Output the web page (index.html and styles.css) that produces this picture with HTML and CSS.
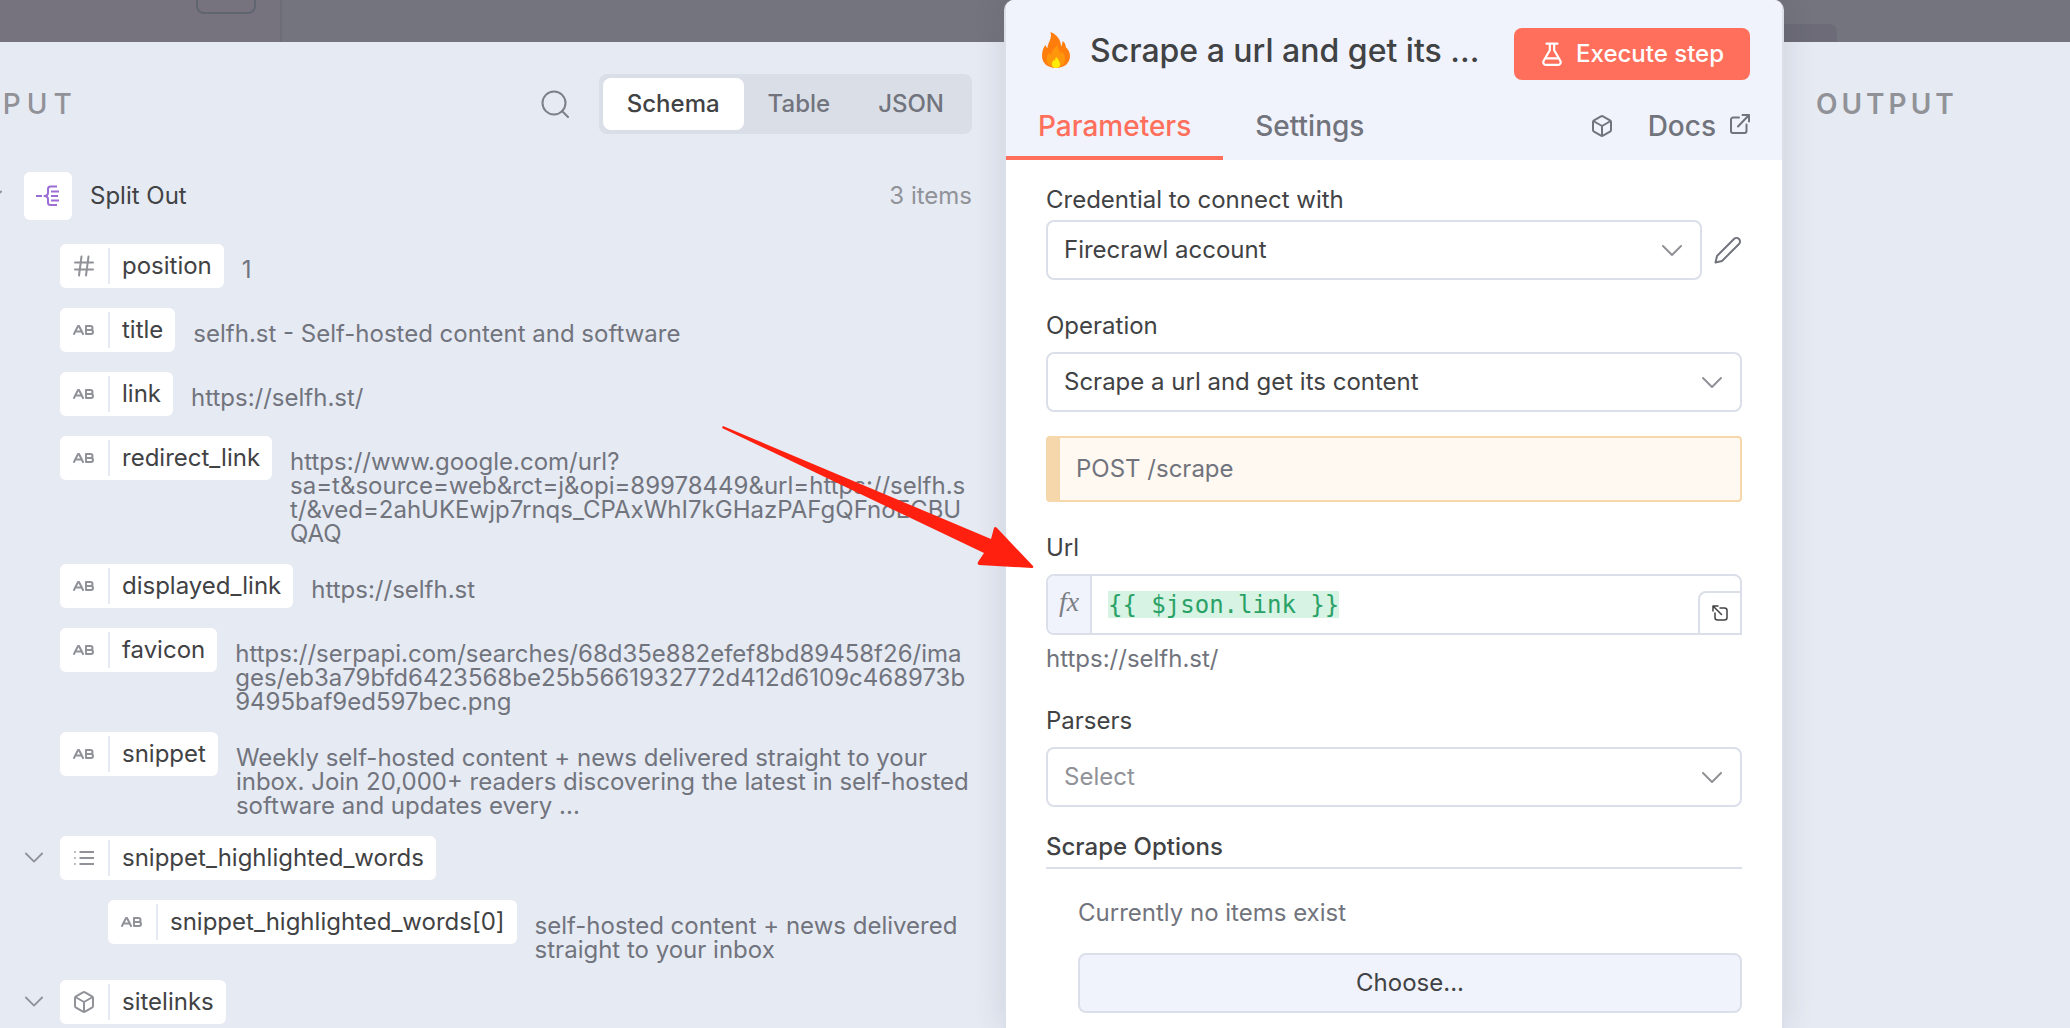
FILE: index.html
```html
<!DOCTYPE html>
<html lang="en">
<head>
  <meta charset="utf-8">
  <title>Scrape a url and get its content</title>
  <link rel="stylesheet" href="styles.css">
</head>
<body>

  <!-- shared icons -->
  <svg class="sprite" aria-hidden="true">
    <symbol id="chevron" viewBox="0 0 20 12">
      <path d="M1 1l9 9 9-9" />
    </symbol>
    <symbol id="text-type" viewBox="0 0 22 12">
      <path d="M1 10L5 2h1l4 8M3 7.500h5M13 2v8h5a2 2 0 0 0 0-4h-5h4.500a2 2 0 0 0 0-4z" />
    </symbol>
    <symbol id="box" viewBox="0 0 24 24">
      <path d="M21 8a2 2 0 0 0-1-1.730l-7-4a2 2 0 0 0-2 0l-7 4A2 2 0 0 0 3 8v8a2 2 0 0 0 1 1.730l7 4a2 2 0 0 0 2 0l7-4A2 2 0 0 0 21 16zM3.300 7l8.700 5 8.700-5M12 22V12" />
    </symbol>
  </svg>

  <div class="app">
    <div class="canvas">
      <div class="sidebar"><div class="sidebar-box"></div></div>
      <div class="canvas-tab"></div>
    </div>

    <section class="input-panel">
      <header class="input-header">
        <h2 class="panel-title wide">INPUT</h2>
        <button class="icon-button search" aria-label="Search">
          <svg class="icon" viewBox="0 0 28 28"><circle cx="13" cy="13" r="11.500" /><path d="M21 21l6 6" /></svg>
        </button>
        <div class="switcher">
          <button class="switch active">Schema</button>
          <button class="switch">Table</button>
          <button class="switch">JSON</button>
        </div>
      </header>

      <div class="node-row">
        <button class="toggle" aria-label="Collapse Split Out"><svg class="icon"><use href="#chevron" /></svg></button>
        <span class="node-icon">
          <svg viewBox="0 0 24 24">
            <path d="M0 12h6M21 2.500h-6.500q-2.500 0-2.500 2.500v3.500q0 3.500-3.500 3.500q3.500 0 3.500 3.500v3q0 2.500 2.500 2.500H21M15 7.500h8M15 12h7M15 16.500h8" />
          </svg>
        </span>
        <span class="node-name">Split Out</span>
        <span class="node-count">3 items</span>
      </div>

      <div class="schema">
        <div class="row">
          <span class="pill"><span class="type"><svg class="hash" viewBox="0 0 20 22"><path d="M1 7.500h18M1 14.500h18M7.500 1.500l-2.500 19M14.500 1.500l-2.500 19" /></svg></span><span class="name">position</span></span>
          <span class="value">1</span>
        </div>
        <div class="row">
          <span class="pill"><span class="type"><svg class="ab"><use href="#text-type" /></svg></span><span class="name">title</span></span>
          <span class="value">selfh.st - Self-hosted content and software</span>
        </div>
        <div class="row">
          <span class="pill"><span class="type"><svg class="ab"><use href="#text-type" /></svg></span><span class="name">link</span></span>
          <span class="value">https://selfh.st/</span>
        </div>
        <div class="row">
          <span class="pill"><span class="type"><svg class="ab"><use href="#text-type" /></svg></span><span class="name">redirect_link</span></span>
          <span class="value">https://www.google.com/url?sa=t&amp;source=web&amp;rct=j&amp;opi=89978449&amp;url=https://selfh.st/&amp;ved=2ahUKEwjp7rnqs_CPAxWhI7kGHazPAFgQFnoECBUQAQ</span>
        </div>
        <div class="row">
          <span class="pill"><span class="type"><svg class="ab"><use href="#text-type" /></svg></span><span class="name">displayed_link</span></span>
          <span class="value">https://selfh.st</span>
        </div>
        <div class="row">
          <span class="pill"><span class="type"><svg class="ab"><use href="#text-type" /></svg></span><span class="name">favicon</span></span>
          <span class="value">https://serpapi.com/searches/68d35e882efef8bd89458f26/images/eb3a79bfd6423568be25b5661932772d412d6109c468973b9495baf9ed597bec.png</span>
        </div>
        <div class="row">
          <span class="pill"><span class="type"><svg class="ab"><use href="#text-type" /></svg></span><span class="name">snippet</span></span>
          <span class="value">Weekly self-hosted content + news delivered straight to your inbox. Join 20,000+ readers discovering the latest in self-hosted software and updates every ...</span>
        </div>
        <div class="row group">
          <button class="toggle" aria-label="Collapse snippet_highlighted_words"><svg class="icon"><use href="#chevron" /></svg></button>
          <span class="pill"><span class="type"><svg class="list" viewBox="0 0 20 16"><path d="M5.500 2H20M5.500 8H20M5.500 14H20" /><path class="dots" d="M0 2h2M0 8h2M0 14h2" /></svg></span><span class="name">snippet_highlighted_words</span></span>
        </div>
        <div class="row nested">
          <span class="pill"><span class="type"><svg class="ab"><use href="#text-type" /></svg></span><span class="name">snippet_highlighted_words[0]</span></span>
          <span class="value">self-hosted content + news delivered straight to your inbox</span>
        </div>
        <div class="row group">
          <button class="toggle" aria-label="Collapse sitelinks"><svg class="icon"><use href="#chevron" /></svg></button>
          <span class="pill"><span class="type"><svg class="cube"><use href="#box" /></svg></span><span class="name">sitelinks</span></span>
        </div>
      </div>
    </section>

    <main class="node-panel">
      <header class="node-header">
        <div class="title-row">
          <svg class="flame" viewBox="0 0 28 36">
            <path fill="#ff7d0c" d="M8.500 0C15 2.500 19 8 19 14.500c1-1.500 1.500-3.500 1.500-5.500 2 1 3 3 3.500 6.500 2.500 2 4 5 4 8.500 0 7-5.500 12-14 12S0 31 0 24c0-5 1.500-8.500 3.500-11 .500 1.500 1 2.500 2 3C5.500 11 10.500 7 8.500 0z" />
            <path fill="#ff960b" d="M17 18c1 1 1 2.500 1 4 1-.500 1.500-1.500 1.500-3 2.500 2.500 3.500 4.500 3.500 8 0 5-3.500 8.500-9 8.500S4.500 32 4.500 27c0-3 1-4.500 3-6.500 .500 1 1 2 2 2.500C9.500 18.500 12 16 16 13c-.500 2 0 3.500 1 5z" />
            <path fill="#ffec08" d="M14 25c3 3 4 5 4 7.500 0 2-1.500 3.500-4 3.500s-4-1.500-4-3.500c0-2 .500-3.500 1.500-4.500l1 1c.500-1.500 1-2.500 1.500-4z" />
          </svg>
          <h1 class="node-title">Scrape a url and get its ...</h1>
          <button class="execute">
            <svg class="flask" viewBox="0 0 18 22"><path d="M4 1.500h10M7 1.500v6l-5.500 9.500a2.500 2.500 0 0 0 2 4h11a2.500 2.500 0 0 0 2-4L11 7.500v-6M3.500 15h11" /></svg>
            Execute step
          </button>
        </div>
        <nav class="tabs">
          <button class="tab active">Parameters</button>
          <button class="tab">Settings</button>
          <button class="icon-button community" aria-label="Community node"><svg class="icon"><use href="#box" /></svg></button>
          <a class="docs" href="#">Docs
            <svg class="external" viewBox="0 0 20 20"><path d="M9 3.500H3a2 2 0 0 0-2 2V17a2 2 0 0 0 2 2h11.500a2 2 0 0 0 2-2v-6.500M8 12.500L19 1M12.500 1H19v6.500" /></svg>
          </a>
        </nav>
      </header>

      <form class="parameters">
        <div class="field tight">
          <label for="credential">Credential to connect with</label>
          <div class="credential">
            <div class="select">
              <select id="credential"><option>Firecrawl account</option></select>
              <svg class="arrow"><use href="#chevron" /></svg>
            </div>
            <button type="button" class="icon-button edit" aria-label="Edit credential">
              <svg class="icon" viewBox="0 0 28 28"><path d="M1.500 26.500l1.500-6.500L20 3a3.500 3.500 0 0 1 5 5L8 25z" /></svg>
            </button>
          </div>
        </div>

        <div class="field">
          <label for="operation">Operation</label>
          <div class="select">
            <select id="operation"><option>Scrape a url and get its content</option></select>
            <svg class="arrow"><use href="#chevron" /></svg>
          </div>
        </div>

        <p class="notice">POST /scrape</p>

        <div class="field">
          <label for="url">Url</label>
          <div class="expression">
            <span class="fx">fx</span>
            <input type="text" id="url" class="code" value="{{ $json.link }}" spellcheck="false">
            <button type="button" class="expand" aria-label="Open expression editor">
              <svg viewBox="0 0 16 16"><path d="M8 3h4.500A2.500 2.500 0 0 1 15 5.500v7a2.500 2.500 0 0 1-2.500 2.500h-7A2.500 2.500 0 0 1 3 12.500V8M1 6V1h5M1 1l8.500 8.500" /></svg>
            </button>
          </div>
          <p class="hint">https://selfh.st/</p>
        </div>

        <div class="field after-hint">
          <label for="parsers">Parsers</label>
          <div class="select">
            <select id="parsers" class="placeholder"><option>Select</option></select>
            <svg class="arrow"><use href="#chevron" /></svg>
          </div>
        </div>

        <h3 class="section-title">Scrape Options</h3>
        <div class="options">
          <p class="empty">Currently no items exist</p>
          <button type="button" class="choose">Choose...</button>
        </div>
      </form>
    </main>

    <section class="output-panel">
      <h2 class="panel-title">OUTPUT</h2>
    </section>

    <!-- pointer from the link value to the Url field -->
    <svg class="pointer" viewBox="0 0 312 144" aria-hidden="true">
      <path d="M1 1L269 114L272 103Q273 101 275 103L311 141Q312 143 310 143L257 140Q255 139 256 137L262 128L0 3Z" />
    </svg>
  </div>

</body>
</html>
```
FILE: styles.css
```css
* {
  box-sizing: border-box;
}

body {
  margin: 0;
  font-family: Inter, sans-serif;
  font-size: 24px;
  line-height: 24px;
  color: #414244;
  background-color: #e6eaf3;
}

h1, h2, h3, p {
  margin: 0;
  font-weight: 400;
}

button, select, input {
  padding: 0;
  border: none;
  background: none;
  font: inherit;
  color: inherit;
}

button {
  cursor: pointer;
}

svg {
  display: block;
  fill: none;
  stroke: currentColor;
  stroke-width: 2;
  stroke-linecap: round;
  stroke-linejoin: round;
}

.sprite {
  display: none;
}

.icon {
  width: 100%;
  height: 100%;
}

.icon-button {
  flex: none;
  color: #71747d;
}

/* Page frame: dimmed canvas on top, three panels below */
.app {
  position: relative;
  display: grid;
  grid-template-columns: minmax(0, 1004fr) minmax(0, 780fr) minmax(0, 286fr);
  grid-template-rows: 42px auto;
  height: 100vh;
  overflow: hidden;
}

.canvas {
  grid-area: 1 / 1 / 2 / 4;
  display: flex;
  justify-content: space-between;
  background-color: #74747e;
}

.sidebar {
  display: flex;
  justify-content: flex-end;
  width: 282px;
  padding-right: 24px;
  border-right: 2px solid #6d6d7a;
  background-color: #76737f;
}

.sidebar-box {
  width: 60px;
  height: 14px;
  border: 2px solid #616471;
  border-top: none;
  border-radius: 0 0 8px 8px;
}

.canvas-tab {
  align-self: flex-end;
  width: 80px;
  height: 18px;
  margin-right: 233px;
  border-radius: 0 8px 0 0;
  background-color: #6c6b77;
}

.panel-title {
  font-size: 28px;
  line-height: 60px;
  font-weight: 600;
  letter-spacing: 4px;
  color: #909298;
}

.panel-title.wide {
  font-weight: 500;
  letter-spacing: 6px;
}

/* Input panel */
.input-panel {
  grid-area: 2 / 1 / 3 / 2;
  margin-left: -38px;
  padding: 32px 32px 0 0;
}

.input-header {
  display: flex;
  align-items: center;
  margin-bottom: 38px;
}

.search {
  width: 28px;
  height: 28px;
  margin: 0 30px 0 auto;
  color: #7d7f86;
}

.switcher {
  display: flex;
  padding: 4px;
  border-radius: 8px;
  background-color: #dadee7;
}

.switch {
  height: 52px;
  padding: 0 24px;
  border-radius: 8px;
  font-weight: 500;
  color: #71747d;
}

.switch.active {
  background-color: #fff;
  color: #414244;
}

.node-row {
  display: flex;
  align-items: center;
  margin-bottom: 24px;
  padding-left: 22px;
}

.toggle {
  flex: none;
  width: 18px;
  height: 12px;
  color: #909298;
}

.node-icon {
  display: flex;
  align-items: center;
  justify-content: center;
  width: 48px;
  height: 48px;
  margin: 0 18px 0 22px;
  border-radius: 6px;
  background-color: #fff;
  color: #9b6dd5;
}

.node-icon svg {
  width: 24px;
  height: 24px;
  stroke-linecap: butt;
}

.node-count {
  margin-left: auto;
  color: #909298;
}

.schema {
  display: flex;
  flex-direction: column;
  gap: 20px;
  padding-left: 98px;
}

.row {
  display: flex;
  align-items: flex-start;
}

.row.group {
  align-items: center;
  margin-left: -35px;
}

.row.nested {
  margin-left: 48px;
}

.group .toggle {
  margin-right: 17px;
}

.pill {
  display: flex;
  flex: none;
  align-items: center;
  height: 44px;
  border-radius: 6px;
  background-color: #fff;
}

.type {
  display: flex;
  align-items: center;
  justify-content: center;
  width: 50px;
  height: 36px;
  border-right: 2px solid #e6eaf3;
  color: #909298;
}

.ab {
  width: 22px;
  height: 12px;
}

.hash {
  width: 20px;
  height: 22px;
}

.list {
  width: 20px;
  height: 16px;
  stroke-linecap: butt;
}

.dots {
  opacity: 0.6;
}

.cube {
  width: 24px;
  height: 24px;
}

.name {
  padding: 0 12px;
}

.value {
  min-width: 0;
  margin-bottom: -2px;
  padding: 14px 0 0 18px;
  overflow-wrap: anywhere;
  color: #71747d;
}

/* Node panel */
.node-panel {
  z-index: 1;
  grid-area: 1 / 2 / 3 / 3;
  border: 2px solid #dbdfe9;
  border-width: 0 2px;
  border-radius: 10px 10px 0 0;
  background-color: #fff;
  box-shadow: 0 0 32px rgba(50, 50, 70, 0.14);
}

.node-header {
  border-radius: 8px 8px 0 0;
  background-color: #f0f3fb;
}

.title-row {
  display: flex;
  align-items: flex-start;
  padding: 24px 32px 0 36px;
}

.flame {
  flex: none;
  width: 28px;
  height: 36px;
  margin: 8px 20px 0 0;
  stroke: none;
}

.node-title {
  font-size: 32px;
  line-height: 54px;
  font-weight: 500;
  white-space: nowrap;
}

.execute {
  display: flex;
  align-items: center;
  gap: 14px;
  height: 52px;
  margin: 4px 0 0 auto;
  padding: 0 26px 0 28px;
  border-radius: 8px;
  background-color: #ff6f5c;
  font-weight: 500;
  white-space: nowrap;
  color: #fff;
}

.flask {
  width: 20px;
  height: 24px;
}

.tabs {
  display: flex;
  align-items: center;
  height: 80px;
  padding-right: 32px;
  font-size: 28px;
  font-weight: 500;
}

.tab {
  height: 80px;
  padding: 4px 32px 0;
  border: solid transparent;
  border-width: 12px 0 4px;
  color: #71747d;
}

.tab.active {
  border-bottom-color: #ff6f5c;
  color: #ff6f5c;
}

.community {
  width: 24px;
  height: 24px;
  margin: 12px 34px 0 auto;
}

.docs {
  display: flex;
  align-items: center;
  gap: 14px;
  padding-top: 12px;
  text-decoration: none;
  color: #71747d;
}

.external {
  width: 20px;
  height: 20px;
  margin-bottom: 4px;
}

.parameters {
  padding: 28px 40px 0;
}

.field {
  margin-top: 34px;
}

.field.tight {
  margin-top: 0;
}

.field.after-hint {
  margin-top: 38px;
}

.field label {
  display: block;
  margin-bottom: 14px;
}

.tight label {
  margin-bottom: 8px;
}

.credential {
  display: flex;
  align-items: center;
}

.credential .select {
  flex: 1;
}

.edit {
  width: 28px;
  height: 28px;
  margin-left: 12px;
}

.select {
  position: relative;
}

.select select {
  display: block;
  width: 100%;
  height: 60px;
  padding: 0 48px 0 16px;
  border: 2px solid #dbdfe9;
  border-radius: 8px;
  background-color: #fff;
  line-height: 32px;
  appearance: none;
}

.select .placeholder {
  color: #909298;
}

.arrow {
  position: absolute;
  top: 25px;
  right: 20px;
  width: 20px;
  height: 12px;
  color: #909298;
  pointer-events: none;
}

.notice {
  margin-top: 24px;
  padding: 19px 16px;
  border: 2px solid #f6d7ab;
  border-left-width: 14px;
  border-radius: 4px;
  background-color: #fff9f2;
  color: #71747d;
}

.expression {
  display: flex;
  align-items: stretch;
  height: 61px;
  border: 2px solid #dbdfe9;
  border-radius: 8px 8px 0 8px;
}

.fx {
  width: 44px;
  border-right: 2px solid #dbdfe9;
  border-radius: 6px 0 0 6px;
  background-color: #f0f3fb;
  font-family: "Liberation Serif", serif;
  font-size: 28px;
  font-style: italic;
  line-height: 52px;
  text-align: center;
  color: #7d7f86;
}

.code {
  align-self: center;
  width: 16ch;
  height: 27px;
  margin-left: 16px;
  background-color: #d6f3e3;
  font-family: "DejaVu Sans Mono", monospace;
  color: #2aa166;
}

.expand {
  display: flex;
  align-items: center;
  justify-content: center;
  align-self: flex-end;
  width: 42px;
  height: 42px;
  margin-left: auto;
  border: solid #dbdfe9;
  border-width: 2px 0 0 2px;
  border-radius: 8px 0 0 0;
}

.expand svg {
  width: 16px;
  height: 16px;
  stroke-width: 1.5;
}

.hint {
  margin-top: 12px;
  color: #71747d;
}

.section-title {
  margin-top: 28px;
  padding-bottom: 8px;
  border-bottom: 2px solid #dbdfe9;
  font-size: 24px;
  font-weight: 500;
}

.options {
  padding: 32px 0 0 32px;
}

.empty {
  margin-bottom: 28px;
  color: #71747d;
}

.choose {
  width: 100%;
  height: 60px;
  border: 2px solid #dbdfe9;
  border-radius: 8px;
  background-color: #f0f3fb;
}

/* Output panel */
.output-panel {
  grid-area: 2 / 3 / 3 / 4;
  padding: 32px 0 0 32px;
}

/* Red arrow drawn over the panels */
.pointer {
  position: absolute;
  z-index: 2;
  top: 425px;
  left: 722px;
  width: 312px;
  height: 144px;
  fill: #ff2010;
  stroke: none;
}
```
